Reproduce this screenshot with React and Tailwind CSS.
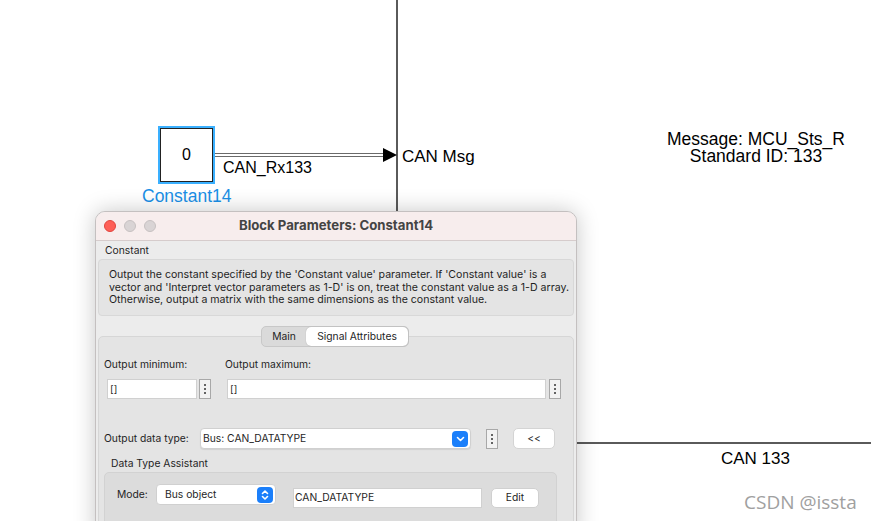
import React from 'react';

const Dots = ({ className = '' }) => (
  <div className={`flex h-[20px] w-[12px] flex-col items-center justify-center gap-[2px] border border-[#a8a8a8] bg-[#f2f2f2] ${className}`}>
    <span className="h-[2px] w-[2px] rounded-full bg-[#333]"></span>
    <span className="h-[2px] w-[2px] rounded-full bg-[#333]"></span>
    <span className="h-[2px] w-[2px] rounded-full bg-[#333]"></span>
  </div>
);

const BlueButton = ({ updown }) => (
  <div className="flex h-[16px] w-[16px] items-center justify-center rounded-[4px] bg-[#1b7ffa]">
    {updown ? (
      <svg width="8" height="12" viewBox="0 0 8 12" fill="none" stroke="white" strokeWidth="1.6" strokeLinecap="round" strokeLinejoin="round">
        <path d="M1.5 4.5 L4 2 L6.5 4.5" />
        <path d="M1.5 7.5 L4 10 L6.5 7.5" />
      </svg>
    ) : (
      <svg width="9" height="6" viewBox="0 0 9 6" fill="none" stroke="white" strokeWidth="1.6" strokeLinecap="round" strokeLinejoin="round">
        <path d="M1.5 1.5 L4.5 4.5 L7.5 1.5" />
      </svg>
    )}
  </div>
);

const Canvas = () => (
  <div className="absolute inset-0 font-['Liberation_Sans',Arial,sans-serif] text-black">
    {/* bus line vertical */}
    <div className="absolute left-[396px] top-0 h-[215px] w-[2px] bg-[#5a5a5a]"></div>
    {/* bus line horizontal */}
    <div className="absolute left-[570px] top-[442px] h-[2px] w-[301px] bg-[#5a5a5a]"></div>

    {/* constant block */}
    <div className="absolute left-[158px] top-[126px] h-[58px] w-[57px] border-2 border-[#3ab0ff]">
      <div className="flex h-full w-full items-center justify-center border border-[#222] bg-white text-[16px]">0</div>
    </div>
    <div className="absolute left-[142px] top-[183px] text-[17.5px] text-[#1a8fe6]">Constant14</div>

    {/* signal */}
    <div className="absolute left-[215px] top-[153px] h-[4px] w-[170px] border-y border-[#6a6a6a] bg-white"></div>
    <svg className="absolute left-[382px] top-[147px]" width="16" height="16" viewBox="0 0 16 16">
      <path d="M1 1 L15 8 L1 15 Z" fill="#000" />
    </svg>
    <div className="absolute left-[223px] top-[156px] text-[16px]">CAN_Rx133</div>
    <div className="absolute left-[402px] top-[144px] text-[17px]">CAN Msg</div>

    <div className="absolute left-[640px] top-[131px] w-[232px] text-center text-[17.5px] leading-[17px]">
      <div>Message: MCU_Sts_R</div>
      <div>Standard ID: 133</div>
    </div>

    <div className="absolute left-[721px] top-[446px] text-[17px]">CAN 133</div>
    <div className="absolute left-[744px] top-[488px] font-['Open_Sans',sans-serif] text-[19px] text-[#a0a0a0]">CSDN @issta</div>
  </div>
);

const Dialog = () => (
  <div className="absolute left-[95px] top-[211px] h-[330px] w-[482px] overflow-hidden rounded-t-[10px] border border-[#c4c0c0] bg-[#ececec] font-['Inter',sans-serif] text-[10.3px] text-[#1f1f1f] shadow-[0_0_22px_rgba(0,0,0,0.22)]">
    <div className="relative flex h-[29px] items-center border-b border-[#d6cccc] bg-[#f7eded] pl-[8px]">
      <div className="flex gap-[8px]">
        <span className="h-[12px] w-[12px] rounded-full border border-[#e0443e] bg-[#fe5f57]"></span>
        <span className="h-[12px] w-[12px] rounded-full border border-[#c6c0c1] bg-[#d9d4d5]"></span>
        <span className="h-[12px] w-[12px] rounded-full border border-[#c6c0c1] bg-[#d9d4d5]"></span>
      </div>
      <div className="absolute inset-0 flex items-center justify-center text-[13.2px] font-bold text-[#444]">Block Parameters: Constant14</div>
    </div>

    <div className="px-[2px]">
      <div className="pl-[7px] pt-[2px] leading-[14px]">Constant</div>
      <div className="mt-[2px] h-[57px] whitespace-nowrap rounded-[4px] border border-[#d8d8d8] bg-[#e4e4e4] pl-[10px] pt-[9px] text-[10.6px] leading-[12.5px]">
        <div>Output the constant specified by the 'Constant value' parameter. If 'Constant value' is a</div>
        <div>vector and 'Interpret vector parameters as 1-D' is on, treat the constant value as a 1-D array.</div>
        <div>Otherwise, output a matrix with the same dimensions as the constant value.</div>
      </div>

      <div className="relative z-10 mt-[10px] flex justify-center pr-[2px]">
        <div className="flex h-[21px] rounded-[5px] border border-[#c8c8c8] bg-[#dadada]">
          <div className="flex w-[44px] items-center justify-center">Main</div>
          <div className="flex w-[102px] items-center justify-center rounded-[5px] bg-white shadow-[0_0_1px_rgba(0,0,0,0.3)]">Signal Attributes</div>
        </div>
      </div>

      <div className="-mt-[11px] h-[200px] rounded-[5px] border border-[#d6d6d6] bg-[#e4e4e4] pt-[20px]">
        <div className="flex pl-[5px]">
          <div className="w-[121px]">
            <div className="leading-[14px]">Output minimum:</div>
            <div className="mt-[8px] flex items-center gap-[2px] pl-[3px]">
              <div className="flex h-[20px] w-[90px] items-center border border-[#d0d0d0] bg-white pl-[2px] text-[10px]">[]</div>
              <Dots />
            </div>
          </div>
          <div>
            <div className="leading-[14px]">Output maximum:</div>
            <div className="mt-[8px] flex items-center gap-[3px] pl-[2px]">
              <div className="flex h-[20px] w-[319px] items-center border border-[#d0d0d0] bg-white pl-[2px] text-[10px]">[]</div>
              <Dots />
            </div>
          </div>
        </div>

        <div className="mt-[29px] flex items-center pl-[5px]">
          <div className="w-[96px]">Output data type:</div>
          <div className="flex h-[21px] w-[271px] items-center justify-between rounded-[4px] border border-[#d0d0d0] bg-white pl-[2px] pr-[2px] shadow-[0_1px_1px_rgba(0,0,0,0.08)]">
            <span>Bus: CAN_DATATYPE</span>
            <BlueButton />
          </div>
          <Dots className="ml-[15px]" />
          <div className="ml-[15px] flex h-[21px] w-[42px] items-center justify-center rounded-[5px] border border-[#d4d4d4] bg-white">&lt;&lt;</div>
        </div>

        <div className="mt-[7px] pl-[12px] leading-[14px]">Data Type Assistant</div>
        <div className="ml-[5px] mt-[2px] h-[60px] w-[453px] rounded-[5px] border border-[#d2d2d2] bg-[#dcdcdc] pt-[11px]">
          <div className="flex items-start pl-[12px]">
            <div className="flex h-[21px] w-[39px] items-center">Mode:</div>
            <div className="flex h-[21px] w-[120px] items-center justify-between rounded-[4px] border border-[#d0d0d0] bg-white pl-[8px] pr-[2px]">
              <span>Bus object</span>
              <BlueButton updown />
            </div>
            <div className="ml-[17px] mt-[4px] flex h-[20px] w-[189px] items-center border border-[#d0d0d0] bg-white pl-[1px]">CAN_DATATYPE</div>
            <div className="ml-[9px] mt-[4px] flex h-[20px] w-[48px] items-center justify-center rounded-[5px] border border-[#d0d0d0] bg-white">Edit</div>
          </div>
        </div>
      </div>
    </div>
  </div>
);

export default function App() {
  return (
    <div className="relative h-[521px] w-[871px] overflow-hidden bg-white">
      <Canvas />
      <Dialog />
    </div>
  );
}
